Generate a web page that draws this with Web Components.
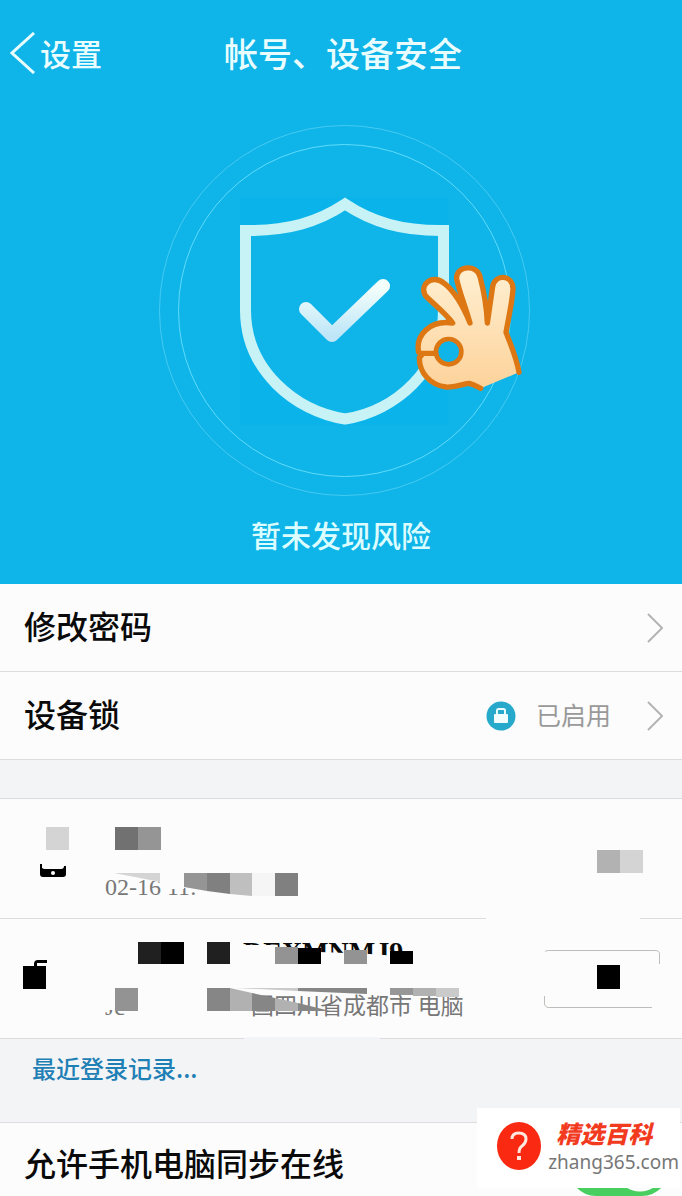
<!DOCTYPE html>
<html lang="zh-CN">
<head>
<meta charset="utf-8">
<meta name="viewport" content="width=device-width, initial-scale=1">
<title>帐号、设备安全</title>
<style>
    html, body {
        margin: 0;
        background: #f3f4f6;
    }
    body {
        font-family: "Liberation Sans", "Noto Sans CJK SC", sans-serif;
        color: #0a0a0a;
    }
</style>
</head>
<body>
<security-page></security-page>

<script>
function define(name, html) {
    customElements.define(name, class extends HTMLElement {
        constructor() {
            super();
            this.attachShadow({ mode: 'open' }).innerHTML = html;
        }
    });
}

// Top bar: back button on the left, title in the middle
define('nav-bar', `
    <style>
        :host {
            display: grid;
            grid-template-columns: 1fr auto 1fr;
            align-items: center;
            padding: 29px 6px 38px 10px;
            color: #e9fdff;
        }
        button {
            display: flex;
            align-items: center;
            gap: 4px;
            justify-self: start;
            padding: 0;
            border: 0;
            background: none;
            color: inherit;
            font: 500 31px/48px "Noto Sans CJK SC", sans-serif;
        }
        h1 {
            margin: 0;
            font: 500 34px/48px "Noto Sans CJK SC", sans-serif;
        }
    </style>
    <button type="button">
        <svg width="26" height="42" viewBox="0 0 26 42" fill="none" stroke="currentColor" stroke-width="3" aria-hidden="true"><path d="M24 1 2 21 24 41"/></svg>
        <slot name="back"></slot>
    </button>
    <h1><slot></slot></h1>
`);

// Shield with a tick inside two rings, and the OK hand over its edge
define('shield-art', `
    <style>
        :host { display: block; }
        svg { display: block; margin: 0 auto; }
    </style>
    <svg width="382" height="390" viewBox="0 0 382 390" fill="none" aria-hidden="true">
        <defs>
            <linearGradient id="tick" x1="0" y1="0" x2="0" y2="1">
                <stop offset="0" stop-color="#f4fffb"/>
                <stop offset="1" stop-color="#bfe6f8"/>
            </linearGradient>
            <linearGradient id="skin" x1="0" y1="0" x2="0" y2="1">
                <stop offset="0" stop-color="#fff0d2"/>
                <stop offset="1" stop-color="#fdd29a"/>
            </linearGradient>
        </defs>
        <circle cx="194.500" cy="195.500" r="185" stroke="#46cbf3"/>
        <circle cx="194.500" cy="195.500" r="166" stroke="#5fdcfa"/>
        <path d="M90 82H299V310H90Z" fill="#0ab4eb"/>
        <path d="M195 89C168 107 138 116 95.500 115.500V195C95.500 255 145 296 195 304C245 296 293.500 255 293.500 195V115.500C252 116 222 107 195 89Z" fill="#0fb4e8" stroke="#c8f3f6" stroke-width="11"/>
        <path d="M156 194 182 220 233 171" stroke="url(#tick)" stroke-width="14" stroke-linecap="round" stroke-linejoin="round"/>
        <g transform="scale(.333333)" stroke="#dc7714" stroke-width="16" stroke-linejoin="round" stroke-linecap="round">
            <path fill="url(#skin)" d="M1107 772C1100 730 1084 692 1068 652C1076 605 1087 560 1089 522C1088 478 1034 476 1028 515C1023 550 1018 585 1012 624C1010 580 1002 530 990 485C982 446 916 452 920 492C928 530 946 575 960 624C942 580 920 535 884 506C845 472 802 515 830 546C864 578 891 600 908 624C840 614 796 660 806 712L816 719L808 728C808 775 842 810 888 816C922 818 943 805 958 805C972 808 982 815 992 820"/>
            <path d="M812 715H855"/>
            <circle cx="896" cy="710" r="38" fill="#0fb4e8" stroke-width="14"/>
        </g>
    </svg>
`);

define('security-hero', `
    <style>
        :host {
            display: block;
            padding-bottom: 21px;
            background: #0fb4e8;
        }
        p {
            margin: 0;
            text-align: center;
            color: #dcfdff;
            font: 500 30px/58px "Noto Sans CJK SC", sans-serif;
        }
    </style>
    <nav-bar><span slot="back">设置</span>帐号、设备安全</nav-bar>
    <shield-art></shield-art>
    <p><slot></slot></p>
`);

// Setting row with an optional value before the chevron
define('setting-row', `
    <style>
        :host {
            display: block;
            background: #fcfcfc;
            border-bottom: 1px solid #dcdcde;
        }
        button {
            display: flex;
            align-items: center;
            width: 100%;
            min-height: 87px;
            padding: 0 19px 0 24px;
            border: 0;
            background: none;
            color: inherit;
            text-align: left;
            font: 500 32px/48px "Noto Sans CJK SC", sans-serif;
        }
        .label {
            flex: 1;
            padding-bottom: 6px;
        }
        .value {
            display: flex;
            align-items: center;
            gap: 20px;
            margin-right: 36px;
            color: #999;
            font-size: 25px;
            font-weight: 400;
        }
        ::slotted(span) { padding-bottom: 4px; }
    </style>
    <button type="button">
        <span class="label"><slot></slot></span>
        <span class="value"><slot name="value"></slot></span>
        <svg width="16" height="30" viewBox="0 0 16 30" fill="none" stroke="#b4b4b6" stroke-width="2" aria-hidden="true"><path d="M1 1 15 15 1 29"/></svg>
    </button>
`);

define('lock-badge', `
    <style>
        :host { display: block; }
        svg { display: block; }
    </style>
    <svg width="30" height="30" viewBox="0 0 30 30" aria-hidden="true">
        <circle cx="15" cy="15" r="14.500" fill="#27a9cb"/>
        <path d="M11 14V9.500Q11 8 12.500 8H17.500Q19 8 19 9.500V14" fill="none" stroke="#e8fbff" stroke-width="2"/>
        <rect x="8" y="13" width="14" height="9" rx="1" fill="#f2fdff"/>
    </svg>
`);

// Device row; the "mask" slot is an overlay that hides private details
define('device-row', `
    <style>
        :host {
            position: relative;
            display: grid;
            grid-template-columns: 61px 1fr auto;
            align-items: center;
            column-gap: 22px;
            padding: 18px 22px 17px;
            background: #fcfcfc;
            border-bottom: 1px solid #dcdcde;
        }
        .text {
            display: grid;
            row-gap: 26px;
        }
        .name {
            min-height: 30px;
            font: 700 28px/30px "Liberation Serif", serif;
        }
        .detail {
            display: flex;
            color: #777;
            font: 24px/28px "Liberation Serif", "Noto Sans CJK SC", serif;
        }
        ::slotted([slot=mask]) {
            position: absolute;
            top: 0;
            left: 0;
            pointer-events: none;
        }
    </style>
    <span></span>
    <div class="text">
        <div class="name"><slot name="name"></slot></div>
        <div class="detail"><slot name="detail"></slot></div>
    </div>
    <slot name="action"></slot>
    <slot name="mask"></slot>
`);

define('outline-button', `
    <style>
        :host { display: block; }
        button {
            display: block;
            padding: 0;
            border: 0;
            background: none;
        }
        svg { display: block; }
    </style>
    <button type="button" aria-label="删除">
        <svg width="116" height="58" viewBox="0 0 116 58" fill="none" stroke="#bdbdb9" aria-hidden="true"><path d="M1 1.500Q2 .5 5 .5H111Q115.500 .5 115.500 4V14M.5 46V53Q.5 57.500 5 57.500H108"/></svg>
    </button>
`);

// Sync row with the green switch at the right
define('sync-row', `
    <style>
        :host {
            display: flex;
            justify-content: space-between;
            padding: 15px 13px 0 24px;
            border-top: 1px solid #dcdcde;
            background: #fcfcfc;
        }
        label { font: 500 32px/48px "Noto Sans CJK SC", sans-serif; }
        input {
            appearance: none;
            width: 100px;
            height: 54px;
            margin: 4px 0 0;
            border-radius: 27px;
            background: radial-gradient(circle at 71px 25px, #fcfcfc 24px, #48cf60 25px);
        }
    </style>
    <label for="sync"><slot></slot></label>
    <input id="sync" type="checkbox" role="switch" checked>
`);

define('site-mark', `
    <style>
        :host {
            position: fixed;
            right: 2px;
            bottom: 8px;
            display: flex;
            align-items: center;
            gap: 6px;
            box-sizing: border-box;
            height: 80px;
            padding: 0 1px 5px 19px;
            background: #fff;
        }
        .words {
            display: grid;
            padding-top: 4px;
        }
        strong {
            padding-left: 8px;
            color: #f23a1e;
            font: italic 900 24px/28px "Liberation Sans", "Noto Sans CJK SC", sans-serif;
        }
        span {
            color: #777;
            font: 19px/26px "Noto Sans", sans-serif;
        }
    </style>
    <svg width="46" height="50" viewBox="0 0 46 50" fill="none" aria-hidden="true">
        <ellipse cx="23" cy="25" rx="22" ry="24" fill="#fa2912"/>
        <path d="M16 18Q16 12 22.500 12Q30 12 30 18Q30 22 26 25Q23 27 23 32" stroke="#ffe9df" stroke-width="3"/>
        <path d="M21 35H25V39H21Z" fill="#ffe9df"/>
    </svg>
    <div class="words"><strong>精选百科</strong><span>zhang365.com</span></div>
`);

define('security-page', `
    <style>
        :host { display: block; }
        .devices {
            margin-top: 38px;
            border-top: 1px solid #dcdcde;
        }
        .place { margin-left: 126px; font-size: 23px; white-space: nowrap; }
        .model { margin-left: 138px; }
        .history { padding: 11px 32px 36px; }
        a {
            color: #1f80b5;
            text-decoration: none;
            font: 500 24px/36px "Noto Sans CJK SC", sans-serif;
        }
        .history a { display: block; }
    </style>
    <security-hero>暂未发现风险</security-hero>
    <setting-row>修改密码</setting-row>
    <setting-row>设备锁<lock-badge slot="value"></lock-badge><span slot="value">已启用</span></setting-row>
    <section class="devices">
        <device-row>
            <span slot="detail">02-16 11:</span>
            <svg slot="mask" width="682" height="120" viewBox="0 0 682 120" aria-hidden="true">
                <path fill="#fcfcfc" d="M137 70H184V90H166V84L137 79ZM184 70H240V93H220L184 89ZM486 118H640V120H486Z"/>
                <path fill="#000" d="M40 65H42V69Q43 70 45 70H61Q64 70 64 67H66V75Q66 78 63 78H43Q40 78 40 75Z"/>
                <circle cx="53" cy="74" r="2" fill="#fff"/>
                <path fill="#d4d4d4" d="M46 28H69V51H46ZM620 51H643V74H620ZM114 74H160V83L140 79Z"/>
                <path fill="#717171" d="M115 28H138V51H115Z"/>
                <path fill="#959595" d="M138 28H161V51H138ZM184 74H207V92L184 88Z"/>
                <path fill="#808080" d="M207 74H230V95L207 92ZM275 74H298V97H275Z"/>
                <path fill="#bfbfbf" d="M230 74H252V97L230 95Z"/>
                <path fill="#f5f5f5" d="M252 74H275V97H252Z"/>
                <path fill="#b2b2b2" d="M597 51H620V74H597Z"/>
            </svg>
        </device-row>
        <device-row>
            <span slot="name" class="model">DEXMNMJ9</span>
            <span slot="detail">Jc</span>
            <span slot="detail" class="place">国四川省成都市 电脑</span>
            <outline-button slot="action"></outline-button>
            <svg slot="mask" width="682" height="120" viewBox="0 0 682 120" aria-hidden="true">
                <path fill="#fcfcfc" d="M236 26H274L276 29 320 33 370 35 412 38V54H236ZM104 70H140V91H104Z"/>
                <path fill="#f3f4f6" d="M244 118H380V120H244Z"/>
                <path fill="#000" d="M23 47H34V45Q34 41 38 41H47V44H37V47H46V70H23ZM161 23H184V45H161ZM298 29H321V45H298ZM390 32H413V45H390ZM597 46H620V70H597Z"/>
                <path fill="#202020" d="M138 23H161V45H138ZM207 23H230V45H207Z"/>
                <path fill="#939393" d="M275 28H298V45H275ZM344 31H367V45H344ZM115 69H138V92H115Z"/>
                <path fill="#868686" d="M207 69H230V92H207ZM252 74 275 79V92H252ZM298 84 330 92H298ZM298 69H367V75L298 72Z"/>
                <path fill="#b1b1b1" d="M230 69 252 74V92H230ZM275 79 298 84V92H275ZM413 69H436V77H413Z"/>
                <path fill="#cacaca" d="M236 69H298V72ZM436 69H459V78H436Z"/>
                <path fill="#979797" d="M390 69H413V76H390Z"/>
            </svg>
        </device-row>
    </section>
    <div class="history"><a href="#history">最近登录记录...</a></div>
    <sync-row>允许手机电脑同步在线</sync-row>
    <site-mark></site-mark>
`);
</script>
</body>
</html>
